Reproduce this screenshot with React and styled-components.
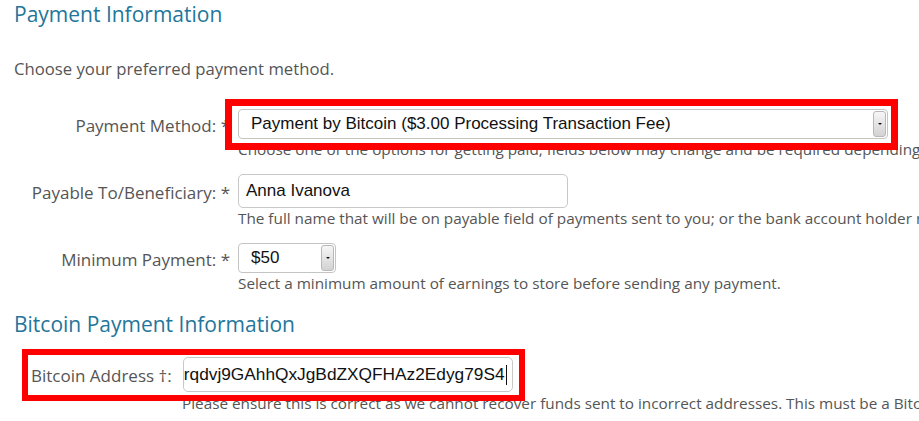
import React from "react";
import styled, { createGlobalStyle } from "styled-components";

const GlobalStyle = createGlobalStyle`
  html, body {
    margin: 0;
    padding: 0;
    background: #ffffff;
    overflow: hidden;
  }
  body {
    font-family: "Open Sans", "DejaVu Sans", sans-serif;
    color: #555555;
  }
`;

const Page = styled.div`
  width: 919px;
  height: 421px;
  overflow: hidden;
  padding-left: 14px;
  box-sizing: border-box;
`;

const Heading = styled.h2`
  margin: 0;
  margin-top: ${(p) => p.top || 0}px;
  font-size: 21px;
  line-height: 28px;
  font-weight: 500;
  color: #23769a;
  white-space: nowrap;
`;

const Intro = styled.p`
  margin: 31px 0 0;
  font-size: 16.7px;
  line-height: 20px;
  color: #555555;
`;

const Fields = styled.div`
  display: flex;
  flex-direction: column;
  gap: 15px;
  margin-top: ${(p) => p.top || 0}px;
`;

const Row = styled.div`
  display: grid;
  grid-template-columns: ${(p) => p.labelWidth}px 1fr;
  column-gap: 8px;
`;

const Label = styled.label`
  align-self: center;
  justify-self: ${(p) => (p.left ? "start" : "end")};
  font-size: 17px;
  line-height: 20px;
  padding-top: 3px;
  color: #555555;
  white-space: nowrap;
`;

const Help = styled.div`
  grid-column: 2;
  margin-left: ${(p) => p.indent || 0}px;
  margin-top: ${(p) => p.top || 0}px;
  font-size: 15.3px;
  line-height: 20px;
  color: #555555;
  white-space: nowrap;
`;

const Highlight = styled.div`
  position: relative;
  display: flex;
  align-items: center;
  width: fit-content;
  gap: ${(p) => p.gap || 0}px;
  padding-left: ${(p) => p.pad || 0}px;

  &::after {
    content: "";
    position: absolute;
    top: ${(p) => p.inset[0]}px;
    right: ${(p) => p.inset[1]}px;
    bottom: ${(p) => p.inset[2]}px;
    left: ${(p) => p.inset[3] + (p.pad || 0)}px;
    border: ${(p) => p.border}px solid #ff0000;
    pointer-events: none;
  }
`;

const SelectBox = styled.div`
  display: flex;
  width: ${(p) => p.width}px;
  height: 30px;
  box-sizing: border-box;
  border: 1px solid #c4c4c4;
  border-radius: 4px;
  background: #ffffff;
  font-family: "Liberation Sans", Arial, sans-serif;
  font-size: 17px;
  color: #111111;
  overflow: hidden;
`;

const SelectValue = styled.span`
  flex: 1;
  display: flex;
  align-items: center;
  padding-left: 12px;
  white-space: nowrap;
`;

const ArrowButton = styled.span`
  position: relative;
  width: 11px;
  margin: 1px;
  border: 1px solid #b8b8b8;
  border-radius: 3px;
  background: linear-gradient(#f6f6f6, #d2d2d2);

  &::after {
    content: "";
    position: absolute;
    left: 50%;
    top: 50%;
    margin-left: -2px;
    margin-top: -1px;
    border-left: 2px solid transparent;
    border-right: 2px solid transparent;
    border-top: 2px solid #111111;
  }
`;

const TextBox = styled.div`
  display: flex;
  align-items: center;
  justify-content: ${(p) => (p.end ? "flex-end" : "flex-start")};
  width: ${(p) => p.width}px;
  height: ${(p) => p.height}px;
  box-sizing: border-box;
  padding: 0 ${(p) => (p.end ? 5 : 0)}px 0 ${(p) => (p.end ? 1 : 7)}px;
  border: 1px solid #c8c8c8;
  border-radius: 5px;
  font-family: "Liberation Sans", Arial, sans-serif;
  font-size: ${(p) => (p.end ? 17.3 : 17)}px;
  color: #111111;
  white-space: nowrap;
  overflow: hidden;
`;

const Caret = styled.span`
  flex: none;
  width: 1px;
  height: 20px;
  margin-left: 1px;
  background: #111111;
`;

const Select = ({ width, value }) => (
  <SelectBox width={width}>
    <SelectValue>{value}</SelectValue>
    <ArrowButton />
  </SelectBox>
);

const App = () => {
  return (
    <Page>
      <GlobalStyle />
      <Heading>Payment Information</Heading>
      <Intro>Choose your preferred payment method.</Intro>

      <Fields top={30}>
        <Row labelWidth={216}>
          <Label>Payment Method: *</Label>
          <Highlight inset={[-10, -10, -11, -13]} border={7}>
            <Select
              width={650}
              value="Payment by Bitcoin ($3.00 Processing Transaction Fee)"
            />
          </Highlight>
          <Help>
            Choose one of the options for getting paid, fields below may change
            and be required depending on your choice.
          </Help>
        </Row>

        <Row labelWidth={216}>
          <Label>Payable To/Beneficiary: *</Label>
          <TextBox width={330} height={34}>
            Anna Ivanova
          </TextBox>
          <Help>
            The full name that will be on payable field of payments sent to
            you; or the bank account holder name.
          </Help>
        </Row>

        <Row labelWidth={216}>
          <Label>Minimum Payment: *</Label>
          <Select width={98} value="$50" />
          <Help>
            Select a minimum amount of earnings to store before sending any
            payment.
          </Help>
        </Row>
      </Fields>

      <Heading top={17}>Bitcoin Payment Information</Heading>

      <Fields top={19}>
        <div>
          <Highlight inset={[-8, -12, -9, -9]} border={6} gap={11} pad={17}>
            <Label left>Bitcoin Address †:</Label>
            <TextBox width={330} height={35} end>
              1Erqdvj9GAhhQxJgBdZXQFHAz2Edyg79S4
              <Caret />
            </TextBox>
          </Highlight>
          <Help indent={168} top={1}>
            Please ensure this is correct as we cannot recover funds sent to
            incorrect addresses. This must be a Bitcoin address.
          </Help>
        </div>
      </Fields>
    </Page>
  );
};

export default App;
